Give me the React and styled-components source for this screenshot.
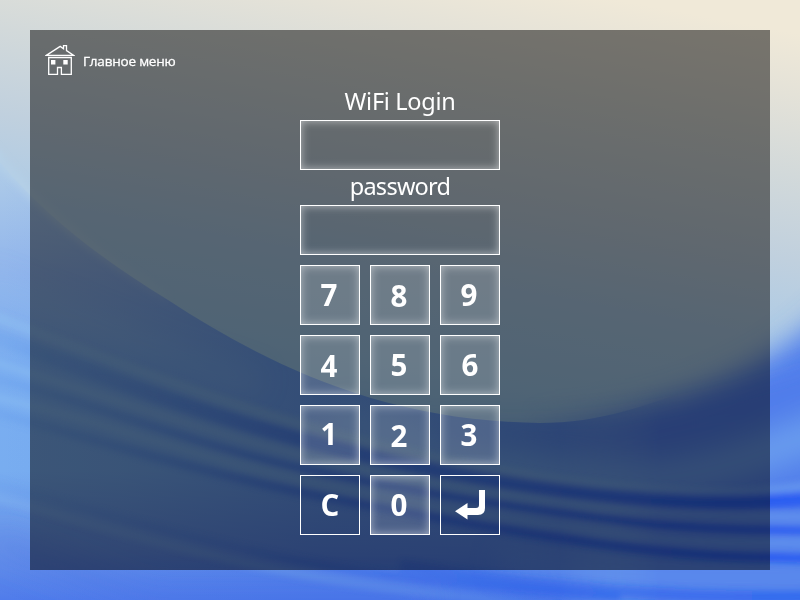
import React from "react";
import styled, { createGlobalStyle } from "styled-components";

const GlobalStyle = createGlobalStyle`
  * { box-sizing: border-box; }
  body { margin: 0; overflow: hidden; }
`;

const Screen = styled.div`
  display: grid;
  width: 800px;
  height: 600px;
  overflow: hidden;
  font-family: "Noto Sans", "Open Sans", sans-serif;
  color: #fff;
`;

const WallpaperArt = styled.svg`
  grid-area: 1 / 1;
  display: block;
  width: 800px;
  height: 600px;
`;

const Panel = styled.main`
  grid-area: 1 / 1;
  z-index: 1;
  margin: 30px;
  display: flex;
  flex-direction: column;
  align-items: center;
  background: rgba(0, 0, 0, 0.5);
`;

const HomeLink = styled.a`
  align-self: flex-start;
  display: flex;
  align-items: center;
  gap: 8px;
  height: 32px;
  margin: 14px 0 0 15px;
  font-family: "Open Sans", sans-serif;
  font-size: 13.5px;
  line-height: 32px;
  white-space: nowrap;
`;

const HomeText = styled.span`
  letter-spacing: -0.2px;
  padding-top: 2px;
  -webkit-text-stroke: 0.3px #fff;
`;

const Form = styled.form`
  display: flex;
  flex-direction: column;
  width: 200px;
  margin-top: 9px;
`;

const FieldLabel = styled.label`
  height: 35px;
  line-height: 33px;
  font-size: 23.5px;
  text-align: center;
  white-space: nowrap;
  letter-spacing: ${(p) => p.$tracking};
`;

const Field = styled.div`
  height: 50px;
  border: 1px solid #fff;
  box-shadow: inset 0 0 8px rgba(255, 255, 255, 0.55);
`;

const Keypad = styled.div`
  display: grid;
  grid-template-columns: repeat(3, 60px);
  grid-auto-rows: 60px;
  gap: 10px;
  margin-top: 10px;
`;

const Key = styled.button`
  display: flex;
  align-items: center;
  justify-content: center;
  padding: 0;
  border: 1px solid #fff;
  color: #fff;
  font: 700 29.5px/40px "Open Sans", sans-serif;
  background: ${(p) => (p.$plain ? "transparent" : "rgba(255,255,255,0.15)")};
  box-shadow: ${(p) => (p.$plain ? "none" : "inset 0 0 10px rgba(255,255,255,0.5)")};
`;

const KeyText = styled.span`
  transform: translate(${(p) => p.$x}px, ${(p) => p.$y}px);
`;

const Icon = styled.svg`
  display: block;
  flex: none;
`;

const DARK_FOLDS = [
  { d: "M-20 331C80 368 180 408 300 439S520 488 620 497S770 501 820 498", w: 15, o: 0.6 },
  { d: "M-20 375C80 398 190 444 300 468S510 506 600 518S750 530 820 531", w: 7, o: 0.65 },
  { d: "M-20 409C80 434 180 468 300 492S500 530 600 544S760 557 820 559", w: 9, o: 0.65 },
  { d: "M-20 479C80 508 190 540 300 561S520 590 620 598", w: 8, o: 0.4 },
  { d: "M400 566C540 587 680 601 840 596", w: 12, o: 0.4 },
];

const LIGHT_FOLDS = [
  { d: "M-20 311C80 348 190 393 300 424S520 478 620 487S760 493 820 484", w: 9, o: 0.4 },
  { d: "M-20 358C80 387 190 428 300 455S510 496 600 507S750 516 820 517", w: 7, o: 0.35 },
  { d: "M-20 394C80 414 190 456 300 480S500 517 600 531S760 543 820 543", w: 8, o: 0.3 },
  { d: "M-20 494C80 520 190 554 300 574S480 596 550 610", w: 9, o: 0.2 },
];

function Wallpaper() {
  return (
    <WallpaperArt viewBox="0 0 800 600" aria-hidden="true">
      <defs>
        <linearGradient id="sky" gradientUnits="userSpaceOnUse" x1="455" y1="-30" x2="370" y2="430">
          <stop offset="0" stopColor="#f0e9d8" />
          <stop offset="0.13" stopColor="#e4e2d8" />
          <stop offset="0.3" stopColor="#d2d9da" />
          <stop offset="0.48" stopColor="#c0d0de" />
          <stop offset="0.65" stopColor="#adcbe6" />
          <stop offset="0.85" stopColor="#9fc8ea" />
          <stop offset="1" stopColor="#90c2ea" />
        </linearGradient>
        <linearGradient id="wave" gradientUnits="userSpaceOnUse" x1="0" y1="170" x2="0" y2="600">
          <stop offset="0" stopColor="#aecbe8" />
          <stop offset="0.25" stopColor="#8fb4ec" />
          <stop offset="0.45" stopColor="#7baef0" />
          <stop offset="0.7" stopColor="#78adf0" />
          <stop offset="0.88" stopColor="#6793e9" />
          <stop offset="1" stopColor="#507ceb" />
        </linearGradient>
        <linearGradient id="depth" gradientUnits="userSpaceOnUse" x1="0" x2="800" y1="0" y2="0">
          <stop offset="0" stopColor="#2d60e6" stopOpacity="0" />
          <stop offset="0.15" stopColor="#2d60e6" stopOpacity="0.06" />
          <stop offset="0.4" stopColor="#2d60e6" stopOpacity="0.24" />
          <stop offset="1" stopColor="#2d60e6" stopOpacity="0.36" />
        </linearGradient>
        <linearGradient id="dark" gradientUnits="userSpaceOnUse" x1="0" x2="800" y1="0" y2="0">
          <stop offset="0" stopColor="#5f98ec" stopOpacity="0.4" />
          <stop offset="0.4" stopColor="#386ae4" />
          <stop offset="0.65" stopColor="#265ae8" />
          <stop offset="1" stopColor="#0c48f5" />
        </linearGradient>
        <linearGradient id="light" gradientUnits="userSpaceOnUse" x1="0" x2="800" y1="0" y2="0">
          <stop offset="0" stopColor="#94c6f4" />
          <stop offset="0.4" stopColor="#90c0e4" />
          <stop offset="1" stopColor="#7ab0f2" />
        </linearGradient>
        <linearGradient id="fadeLeft" gradientUnits="userSpaceOnUse" x1="560" x2="680" y1="0" y2="0">
          <stop offset="0" stopColor="#fff" />
          <stop offset="1" stopColor="#000" />
        </linearGradient>
        <linearGradient id="fadeRight" gradientUnits="userSpaceOnUse" x1="520" x2="660" y1="0" y2="0">
          <stop offset="0" stopColor="#000" />
          <stop offset="1" stopColor="#fff" />
        </linearGradient>
        <linearGradient id="edge" gradientUnits="userSpaceOnUse" x1="0" x2="200" y1="0" y2="0">
          <stop offset="0" stopColor="#b6d1e8" stopOpacity="0.7" />
          <stop offset="1" stopColor="#b6d1e8" stopOpacity="0" />
        </linearGradient>
        <mask id="crisp" maskUnits="userSpaceOnUse" x="-50" y="0" width="900" height="700">
          <rect x="-50" width="900" height="700" fill="url(#fadeLeft)" />
        </mask>
        <mask id="hazy" maskUnits="userSpaceOnUse" x="-50" y="0" width="900" height="700">
          <rect x="-50" width="900" height="700" fill="url(#fadeRight)" />
        </mask>
        <filter id="soft" filterUnits="userSpaceOnUse" x="-60" y="100" width="940" height="620">
          <feGaussianBlur stdDeviation="3.2" />
        </filter>
        <filter id="haze" filterUnits="userSpaceOnUse" x="-60" y="100" width="1040" height="660">
          <feGaussianBlur stdDeviation="14" />
        </filter>
      </defs>
      <rect width="800" height="600" fill="url(#sky)" />
      <g mask="url(#crisp)">
        <path d="M-10 150C45 220 110 264 168 300C265 363 380 421 540 423C600 423 650 405 700 385V620H-10Z" fill="url(#wave)" />
        <path d="M-10 150C45 220 110 264 168 300C265 363 380 421 540 423C600 423 650 405 700 385L900 300V620H-10Z" fill="url(#depth)" />
      </g>
      <path d="M-10 148C45 218 110 262 168 298" fill="none" stroke="url(#edge)" strokeWidth="10" filter="url(#soft)" />
      <g mask="url(#hazy)">
        <g filter="url(#haze)">
          <path d="M400 414C600 444 730 385 790 342C830 312 850 290 880 260V660H400Z" fill="#5280eb" />
        </g>
      </g>
      <g filter="url(#haze)" fill="none">
        <path d="M340 420C450 468 600 492 680 476C730 468 770 450 840 425" stroke="#75a9f0" strokeWidth="34" opacity="0.7" />
        <path d="M440 436C600 450 750 410 830 380" stroke="#4271e7" strokeWidth="20" opacity="0.35" />
        <path d="M-20 280C60 310 150 350 260 383" stroke="#99c5ed" strokeWidth="18" opacity="0.3" />
        <path d="M500 560C600 576 720 580 840 575" stroke="#6c9df0" strokeWidth="20" opacity="0.5" />
        <path d="M-10 540L150 600H430" stroke="#4c75e5" strokeWidth="25" opacity="0.35" />
      </g>
      <g filter="url(#soft)" fill="none">
        {LIGHT_FOLDS.map((f) => (
          <path key={f.d} d={f.d} stroke="url(#light)" strokeWidth={f.w} opacity={f.o} />
        ))}
        {DARK_FOLDS.map((f) => (
          <path key={f.d} d={f.d} stroke="url(#dark)" strokeWidth={f.w} opacity={f.o} />
        ))}
      </g>
    </WallpaperArt>
  );
}

function HouseIcon() {
  return (
    <Icon width="30" height="32" viewBox="45 44 30 32" fill="none" stroke="#fff" strokeWidth="1.3">
      <path d="M46.3 55.4L60.2 46.4L63.5 48.7V45.6H66.5V50.6L73.7 55.4Z" />
      <path d="M48.7 57.5H71.3V74.4H61.4V67.5H57.5V74.4H48.7Z" />
      <path d="M51 60h4.4v4.6H51zM63.3 60h4.4v4.6h-4.4z" fill="#fff" stroke="none" />
    </Icon>
  );
}

function EnterIcon() {
  return (
    <Icon width="58" height="58" viewBox="441 476 58 58" fill="#fff">
      <path d="M479 490H485V508Q485 515 478 515H467.5V519.5L455 511.3L467.5 503V508H476Q479 508 479 505Z" />
    </Icon>
  );
}

const KEYS = [
  { t: "7", x: -1, y: 0 },
  { t: "8", x: -1, y: 1 },
  { t: "9", x: -1, y: 0 },
  { t: "4", x: -1, y: 1 },
  { t: "5", x: -1, y: 0 },
  { t: "6", x: 0, y: 0 },
  { t: "1", x: -1, y: -1 },
  { t: "2", x: -1, y: 1 },
  { t: "3", x: -1, y: 0 },
  { t: "C", x: 0, y: 0, plain: true },
  { t: "0", x: -1, y: 0 },
];

export default function App() {
  return (
    <Screen>
      <GlobalStyle />
      <Wallpaper />
      <Panel>
        <HomeLink>
          <HouseIcon />
          <HomeText>Главное меню</HomeText>
        </HomeLink>
        <Form>
          <FieldLabel $tracking="-0.3px">WiFi Login</FieldLabel>
          <Field />
          <FieldLabel $tracking="-0.75px">password</FieldLabel>
          <Field />
          <Keypad>
            {KEYS.map((k) => (
              <Key key={k.t} type="button" $plain={k.plain}>
                <KeyText $x={k.x} $y={k.y}>{k.t}</KeyText>
              </Key>
            ))}
            <Key type="button" $plain aria-label="Enter">
              <EnterIcon />
            </Key>
          </Keypad>
        </Form>
      </Panel>
    </Screen>
  );
}
